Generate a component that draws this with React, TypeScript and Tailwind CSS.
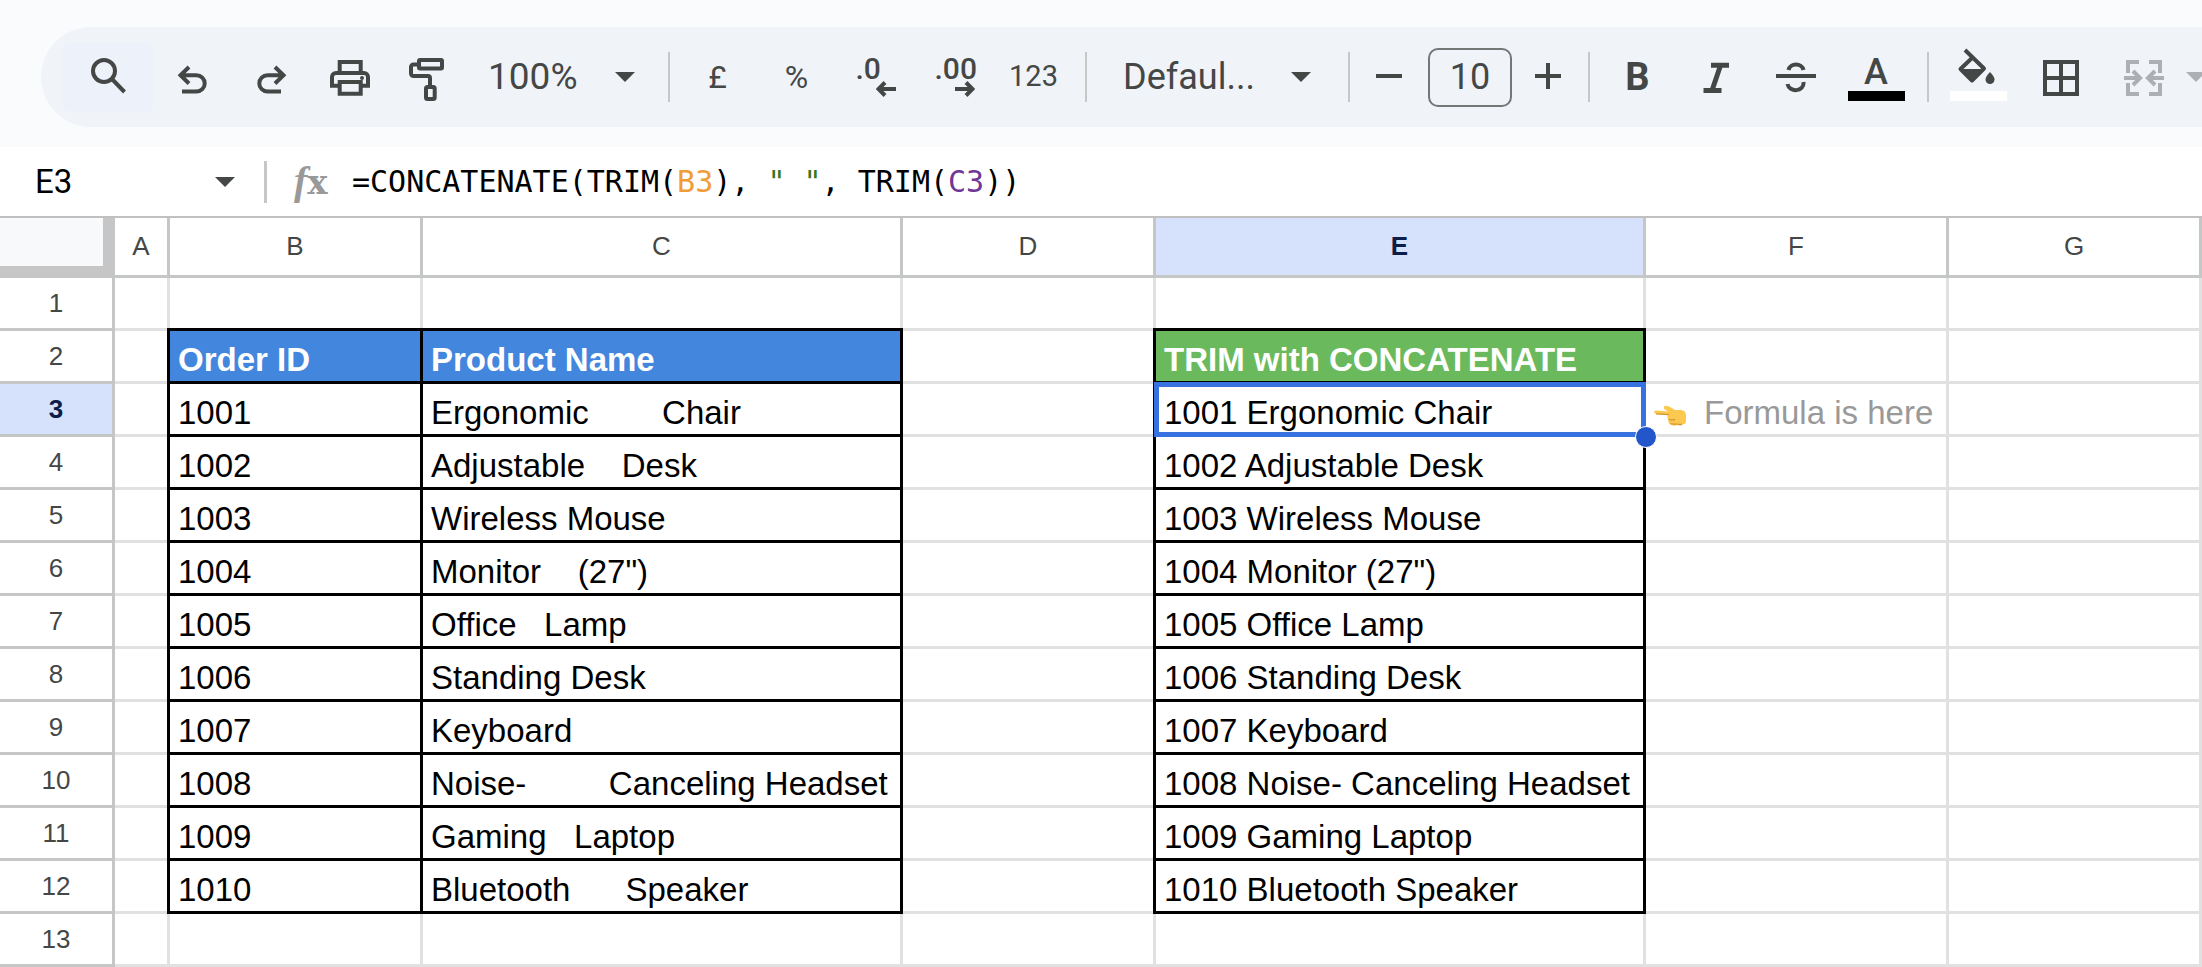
import { useState } from 'react';
import type { ReactNode } from 'react';
import { clsx } from 'clsx';

type Order = { id: string; name: string };

const ORDERS: Order[] = [
  { id: '1001', name: 'Ergonomic        Chair' },
  { id: '1002', name: 'Adjustable    Desk' },
  { id: '1003', name: 'Wireless Mouse' },
  { id: '1004', name: 'Monitor    (27")' },
  { id: '1005', name: 'Office   Lamp' },
  { id: '1006', name: 'Standing Desk' },
  { id: '1007', name: 'Keyboard' },
  { id: '1008', name: 'Noise-         Canceling Headset' },
  { id: '1009', name: 'Gaming   Laptop' },
  { id: '1010', name: 'Bluetooth      Speaker' },
];

const COLUMNS = ['A', 'B', 'C', 'D', 'E', 'F', 'G'];
const ROWS = Array.from({ length: 13 }, (_, i) => i + 1);
const FIRST_ORDER_ROW = 3;
const SELECTED = { col: 'E', row: 3 };

// same result as =CONCATENATE(TRIM(B), " ", TRIM(C))
function joinTrimmed(order: Order) {
  return `${order.id} ${order.name.trim().replace(/\s+/g, ' ')}`;
}

function Icon({ children, className }: { children: ReactNode; className?: string }) {
  return (
    <svg
      viewBox="0 0 60 60"
      className={clsx('h-[60px] w-[60px] shrink-0', className)}
      fill="none"
      stroke="currentColor"
      strokeWidth="4"
      aria-hidden="true"
    >
      {children}
    </svg>
  );
}

function Caret({ className }: { className?: string }) {
  return (
    <svg viewBox="0 0 20 10" className={clsx('h-[10px] w-5 shrink-0', className)} fill="currentColor" aria-hidden="true">
      <path d="M0 0h20L10 10z" />
    </svg>
  );
}

function ToolButton({ label, children, className }: { label: string; children: ReactNode; className?: string }) {
  return (
    <button
      type="button"
      aria-label={label}
      className={clsx('flex h-[70px] shrink-0 items-center justify-center rounded-lg', className ?? 'w-[79px]')}
    >
      {children}
    </button>
  );
}

function Separator({ className }: { className?: string }) {
  return <div className={clsx('h-[50px] w-[2px] shrink-0 bg-[#c7c7c7]', className)} />;
}

function Toolbar() {
  const [fontSize, setFontSize] = useState('10');

  return (
    <div className="overflow-hidden bg-[#f9fbfd] pt-[27px] pb-5 pl-[41px]">
      <div className="flex h-[100px] items-center rounded-l-full bg-[#f0f4f9] pl-[22px] text-[#444746]">
        <ToolButton label="Search the menus" className="w-[91px] bg-[#edf2fa]">
          <Icon>
            <circle cx="25" cy="24" r="11" />
            <path d="M32.5 31.5 45.5 45" />
          </Icon>
        </ToolButton>
        <ToolButton label="Undo" className="w-[78px]">
          <Icon>
            <path d="M26 20 17.5 28.2 26 36.5M18 28.2h15.5a8.2 8.2 0 0 1 0 16.4H19" />
          </Icon>
        </ToolButton>
        <ToolButton label="Redo" className="w-[78px]">
          <Icon>
            <path d="M34 20l8.5 8.2L34 36.5M42 28.2H26.5a8.2 8.2 0 0 0 0 16.4H40" />
          </Icon>
        </ToolButton>
        <ToolButton label="Print" className="w-[78px]">
          <Icon>
            <path d="M20.7 25V15h21v10" />
            <path d="M20 38.7h-7V30a4 4 0 0 1 4-4h28a4 4 0 0 1 4 4v8.7h-7" />
            <path d="M20.7 35h21v11.7h-21z" />
            <circle cx="43" cy="31" r="2" fill="currentColor" stroke="none" />
          </Icon>
        </ToolButton>
        <ToolButton label="Paint format" className="w-[78px]">
          <Icon>
            <rect x="22" y="13" width="23" height="8.5" rx="1" />
            <path d="M22 17.5h-5.5a2.5 2.5 0 0 0-2.5 2.5v6.5a2.5 2.5 0 0 0 2.5 2.5H31a2 2 0 0 1 2 2v9" />
            <rect x="29" y="40" width="8.7" height="12" rx="1.5" />
          </Icon>
        </ToolButton>

        <div className="flex w-[202px] shrink-0 items-center pl-[22px]">
          <select aria-label="Zoom" className="w-[127px] appearance-none bg-transparent font-[Roboto,sans-serif] text-[37px]">
            <option>100%</option>
          </select>
          <Caret />
        </div>
        <Separator className="mr-2" />

        <ToolButton label="Format as currency">
          <span className="font-[Roboto,sans-serif] text-[32px]">£</span>
        </ToolButton>
        <ToolButton label="Format as percent">
          <span className="font-[Roboto,sans-serif] text-[32px]">%</span>
        </ToolButton>
        <ToolButton label="Decrease decimal places">
          <span className="flex w-10 flex-col">
            <span className="text-left font-[Roboto,sans-serif] text-[30px] leading-6 font-medium">.0</span>
            <svg viewBox="0 0 20 16" className="h-4 w-5 self-end" fill="none" stroke="currentColor" strokeWidth="4" aria-hidden="true">
              <path d="M20 8H3M9 1.5 2.5 8 9 14.5" />
            </svg>
          </span>
        </ToolButton>
        <ToolButton label="Increase decimal places">
          <span className="flex w-10 flex-col">
            <span className="text-left font-[Roboto,sans-serif] text-[30px] leading-6 font-medium">.00</span>
            <svg viewBox="0 0 20 16" className="h-4 w-5 self-end" fill="none" stroke="currentColor" strokeWidth="4" aria-hidden="true">
              <path d="M0 8h17M11 1.5 17.5 8 11 14.5" />
            </svg>
          </span>
        </ToolButton>
        <ToolButton label="More formats">
          <span className="font-[Roboto,sans-serif] text-[29px]">123</span>
        </ToolButton>
        <Separator className="ml-3" />

        <div className="flex w-[261px] shrink-0 items-center pl-9">
          <select aria-label="Font" className="w-[168px] appearance-none bg-transparent font-[Roboto,sans-serif] text-[36px]">
            <option>Defaul...</option>
          </select>
          <Caret />
        </div>
        <Separator />

        <ToolButton label="Decrease font size" className="w-[78px]">
          <Icon>
            <path d="M17 29h26" />
          </Icon>
        </ToolButton>
        <input
          aria-label="Font size"
          value={fontSize}
          onChange={(e) => setFontSize(e.target.value)}
          className="h-[59px] w-[84px] shrink-0 rounded-[10px] border-2 border-[#747775] bg-transparent text-center font-[Roboto,sans-serif] text-[36px]"
        />
        <ToolButton label="Increase font size" className="w-[72px]">
          <Icon>
            <path d="M17 29h26M30 16v26" />
          </Icon>
        </ToolButton>
        <Separator className="mr-2 ml-1" />

        <ToolButton label="Bold">
          <span className="font-[Roboto,sans-serif] text-[38px] font-bold">B</span>
        </ToolButton>
        <ToolButton label="Italic">
          <Icon>
            <path d="M24 18.3h18M16.5 43.5h18M33.5 18.5l-8.5 25" strokeWidth="5" />
          </Icon>
        </ToolButton>
        <ToolButton label="Strikethrough">
          <Icon>
            <path d="M10 29h40M22.5 23C24 15.5 36 15.5 37.5 23M21.5 37C23 45.5 38.5 45.5 37.5 35" />
          </Icon>
        </ToolButton>
        <ToolButton label="Text color" className="w-[82px]">
          <span className="flex flex-col items-center">
            <span className="font-[Roboto,sans-serif] text-[36px] leading-[38px] font-medium">A</span>
            <span className="h-[10px] w-[57px] bg-black" />
          </span>
        </ToolButton>
        <Separator className="mr-2 ml-[10px]" />

        <ToolButton label="Fill color" className="w-[82px]">
          <span className="flex flex-col items-center">
            <svg viewBox="0 0 60 38" className="h-[38px] w-[60px] overflow-visible" fill="none" stroke="currentColor" strokeWidth="4" aria-hidden="true">
              <path d="M17-3 36 15.5 24 27.5 12.5 16 24 5" strokeLinejoin="round" />
              <path d="M12 16h24L24 28z" fill="currentColor" stroke="none" />
              <path d="M42 19c3 3.5 4.5 5.5 4.5 7.5a4.5 4.5 0 0 1-9 0c0-2 1.5-4 4.5-7.5z" fill="currentColor" stroke="none" />
            </svg>
            <span className="h-[10px] w-[57px] bg-white" />
          </span>
        </ToolButton>
        <ToolButton label="Borders" className="w-[82px]">
          <Icon>
            <path d="M15 15h32v32H15zM31 15v32M15 31h32" />
          </Icon>
        </ToolButton>
        <ToolButton label="Merge cells" className="w-[82px] text-[#adb0b3]">
          <Icon>
            <path d="M16 26V15h11M37 15h11v11M16 36v11h11M37 47h11V36" />
            <path d="M12 31h16M21 24l7 7-7 7M52 31H36M43 24l-7 7 7 7" />
          </Icon>
        </ToolButton>
        <ToolButton label="Merge type" className="w-[26px] text-[#adb0b3]">
          <Caret />
        </ToolButton>
      </div>
    </div>
  );
}

function FormulaBar() {
  const [cellName, setCellName] = useState('E3');

  return (
    <div className="flex h-[71px] items-center border-b-2 border-[#c0c0c0] bg-white">
      <input
        aria-label="Name box"
        value={cellName}
        onChange={(e) => setCellName(e.target.value)}
        className="w-[215px] shrink-0 pl-[35px] font-[Roboto,sans-serif] text-[33px] text-black"
      />
      <button type="button" aria-label="Named ranges" className="flex h-10 w-5 items-center text-[#444746]">
        <Caret />
      </button>
      <div className="ml-[29px] h-[42px] w-[3px] shrink-0 bg-[#c7c7c7]" />
      <div className="flex w-[85px] shrink-0 items-baseline pl-[27px] text-[#999999]" aria-hidden="true">
        <span className="font-['Liberation_Serif',serif] text-[40px] leading-10 font-bold italic">f</span>
        <span className="font-['DejaVu_Serif',serif] text-[34px] leading-10 font-bold">x</span>
      </div>
      <div
        role="textbox"
        aria-label="Formula"
        contentEditable
        suppressContentEditableWarning
        spellCheck={false}
        className="min-w-0 flex-1 font-['DejaVu_Sans_Mono',monospace] text-[30px] whitespace-pre text-black outline-none"
      >
        =CONCATENATE(TRIM(<span className="text-[#f09d38]">B3</span>),{' '}
        <span className="text-[#38761d]">&quot; &quot;</span>, TRIM(<span className="text-[#6f3896]">C3</span>))
      </div>
    </div>
  );
}

function PointingHand() {
  return (
    <svg viewBox="0 0 32 21" className="inline-block h-[21px] w-8" role="img" aria-label="pointing left">
      <path
        d="M2 5.5 14 6.5 10.5 4.2C9 3 10 .5 12 .8c3 .5 6 2.2 9 4.2h5c4 0 6 2 6 6v5c0 2.5-1.5 3.500-4 3.500h-4c-2 1.500-6 1.500-7.500 0-2-1-2.500-3-2-5-1.500-1.500-1.500-3.500 0-5L2 8.800C-.5 8.500-.5 5.500 2 5.500z"
        fill="#fbc94f"
      />
      <path
        d="M2 8.800l13 .9M14.500 14.500c2 .6 4.500.5 6.500-.2M16.500 18.500c2 .8 5 .8 7 .5M28 19.500h-4"
        stroke="#d8932c"
        strokeWidth="1.3"
        fill="none"
      />
    </svg>
  );
}

function cellContent(col: string, row: number): ReactNode {
  if (row === 2) {
    if (col === 'B') return 'Order ID';
    if (col === 'C') return 'Product Name';
    if (col === 'E') return 'TRIM with CONCATENATE';
  }
  if (col === 'F' && row === SELECTED.row) {
    return (
      <span className="text-[#999999]">
        <PointingHand />
        <span className="ml-[18px]">Formula is here</span>
      </span>
    );
  }
  const order = ORDERS[row - FIRST_ORDER_ROW];
  if (!order) return null;
  if (col === 'B') return order.id;
  if (col === 'C') return order.name;
  if (col === 'E') return joinTrimmed(order);
  return null;
}

function Cell({ col, row }: { col: string; row: number }) {
  const boxed = (col === 'B' || col === 'C' || col === 'E') && row >= 2 && row <= 12;
  const header = boxed && row === 2;
  const selected = col === SELECTED.col && row === SELECTED.row;

  return (
    <td
      className={clsx(
        'h-[53px] border-r-[3px] border-b-[3px] px-2 pb-[2px] align-bottom text-[33px] leading-[38px] whitespace-pre',
        // the shadow covers the left and top gridlines, which belong to the neighbours
        boxed
          ? 'relative border-black shadow-[-3px_-3px_0_#000,-3px_0_0_#000,0_-3px_0_#000]'
          : 'border-[#e1e1e1]',
        header ? 'font-bold text-white' : 'text-black',
        header && (col === 'E' ? 'bg-[#6aba5d]' : 'bg-[#4286de]'),
      )}
    >
      {cellContent(col, row)}
      {selected && (
        <>
          <span className="absolute -top-[2px] -right-[3px] -bottom-[3px] -left-[2px] z-10 border-[5px] border-[#3871e0]" />
          <span className="absolute -right-[14px] -bottom-[14px] z-10 h-[22px] w-[22px] rounded-full border border-white bg-[#2456cb]" />
        </>
      )}
    </td>
  );
}

function Sheet() {
  return (
    <table className="w-full table-fixed border-separate border-spacing-0 bg-white font-['Liberation_Sans',Arial,sans-serif]">
      <colgroup>
        <col className="w-[115px]" />
        <col className="w-[55px]" />
        <col className="w-[253px]" />
        <col className="w-[480px]" />
        <col className="w-[253px]" />
        <col className="w-[490px]" />
        <col className="w-[303px]" />
        <col />
      </colgroup>
      <thead>
        <tr>
          <th className="h-[60px] border-r-[3px] border-b-[3px] border-[#c5c6c6] p-0">
            <div className="h-[57px] border-r-[9px] border-b-[9px] border-[#c6c6c6] bg-[#f8f9fb]" />
          </th>
          {COLUMNS.map((col) => (
            <th
              key={col}
              scope="col"
              className={clsx(
                'h-[60px] border-r-[3px] border-b-[3px] border-[#c5c6c6] p-0 text-[26px]',
                col === SELECTED.col ? 'bg-[#d6e1fb] font-bold text-[#0b1d48]' : 'font-normal text-[#444746]',
              )}
            >
              {col}
            </th>
          ))}
        </tr>
      </thead>
      <tbody>
        {ROWS.map((row) => (
          <tr key={row}>
            <th
              scope="row"
              className={clsx(
                'h-[53px] border-r-[3px] border-b-[3px] border-[#c5c6c6] p-0 text-[26px]',
                row === SELECTED.row ? 'bg-[#d6e1fb] font-bold text-[#0b1d48]' : 'font-normal text-[#444746]',
              )}
            >
              {row}
            </th>
            {COLUMNS.map((col) => (
              <Cell key={col} col={col} row={row} />
            ))}
          </tr>
        ))}
      </tbody>
    </table>
  );
}

export default function App() {
  return (
    <div className="min-h-screen overflow-hidden bg-white">
      <Toolbar />
      <FormulaBar />
      <Sheet />
    </div>
  );
}
